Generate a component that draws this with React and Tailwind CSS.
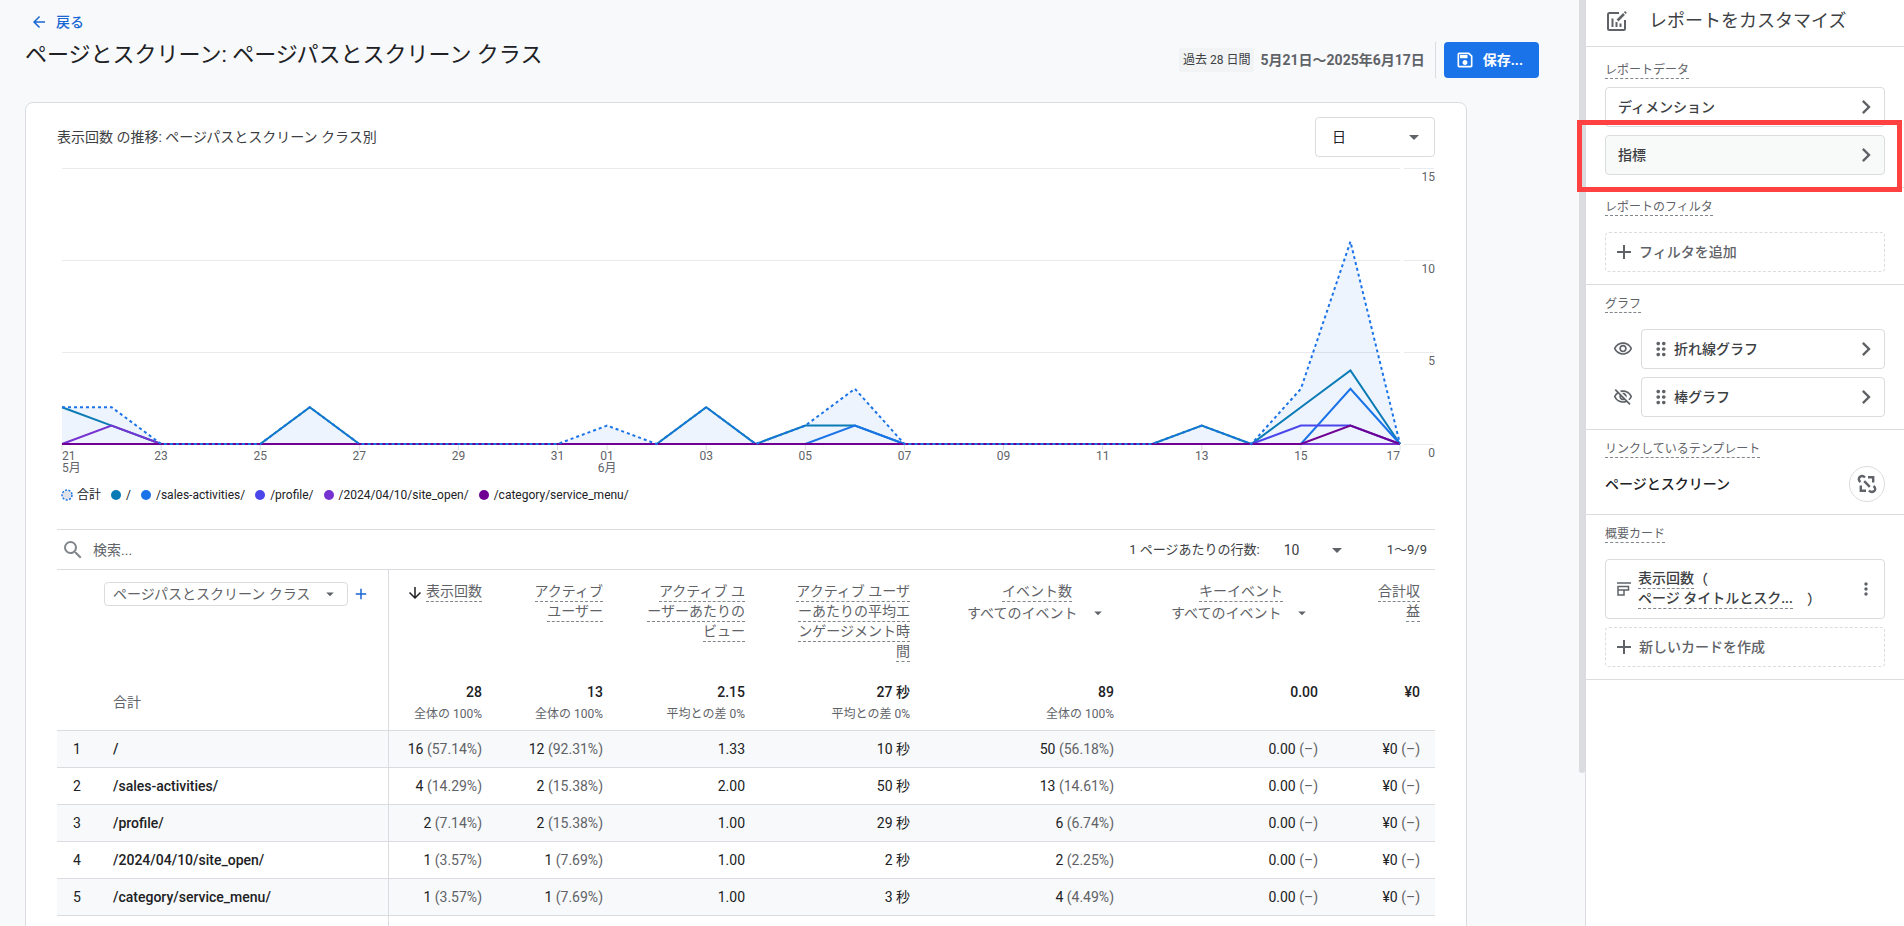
import React, { useState } from 'react'
import {
  MdAdd,
  MdArrowBack,
  MdArrowDownward,
  MdArrowDropDown,
  MdChevronRight,
  MdDragIndicator,
  MdMoreVert,
  MdOutlineSave,
  MdOutlineVisibility,
  MdOutlineVisibilityOff,
  MdSearch,
} from 'react-icons/md'
import clsx from 'clsx'

// Daily values from May 21 to June 17, missing days are zero
const DAYS = 28
const series = [
  { name: '/', color: '#0b7bb5', points: { 0: 2, 1: 1, 5: 2, 13: 2, 15: 1, 16: 1, 23: 1, 25: 2, 26: 4 } },
  { name: '/sales-activities/', color: '#1a73e8', points: { 16: 1, 26: 3 } },
  { name: '/profile/', color: '#4a46ea', points: { 25: 1, 26: 1 } },
  { name: '/2024/04/10/site_open/', color: '#7633d1', points: { 1: 1 } },
  { name: '/category/service_menu/', color: '#6f0093', points: { 26: 1 } },
]
const total = { 0: 2, 1: 2, 5: 2, 11: 1, 13: 2, 15: 1, 16: 3, 23: 1, 25: 3, 26: 11 }

const xLabels = [
  { day: 0, text: '21', month: '5月' },
  { day: 2, text: '23' },
  { day: 4, text: '25' },
  { day: 6, text: '27' },
  { day: 8, text: '29' },
  { day: 10, text: '31' },
  { day: 11, text: '01', month: '6月' },
  { day: 13, text: '03' },
  { day: 15, text: '05' },
  { day: 17, text: '07' },
  { day: 19, text: '09' },
  { day: 21, text: '11' },
  { day: 23, text: '13' },
  { day: 25, text: '15' },
  { day: 27, text: '17' },
]

const columns = [
  { lines: ['表示回数'], sorted: true, total: '28', note: '全体の 100%' },
  { lines: ['アクティブ', 'ユーザー'], total: '13', note: '全体の 100%' },
  { lines: ['アクティブ ユ', 'ーザーあたりの', 'ビュー'], total: '2.15', note: '平均との差 0%' },
  { lines: ['アクティブ ユーザ', 'ーあたりの平均エ', 'ンゲージメント時', '間'], total: '27 秒', note: '平均との差 0%' },
  { lines: ['イベント数'], filter: true, total: '89', note: '全体の 100%' },
  { lines: ['キーイベント'], filter: true, total: '0.00', note: '' },
  { lines: ['合計収', '益'], total: '¥0', note: '' },
]

const rows = [
  { path: '/', cells: [['16', '57.14%'], ['12', '92.31%'], ['1.33'], ['10 秒'], ['50', '56.18%'], ['0.00', '–'], ['¥0', '–']] },
  { path: '/sales-activities/', cells: [['4', '14.29%'], ['2', '15.38%'], ['2.00'], ['50 秒'], ['13', '14.61%'], ['0.00', '–'], ['¥0', '–']] },
  { path: '/profile/', cells: [['2', '7.14%'], ['2', '15.38%'], ['1.00'], ['29 秒'], ['6', '6.74%'], ['0.00', '–'], ['¥0', '–']] },
  { path: '/2024/04/10/site_open/', cells: [['1', '3.57%'], ['1', '7.69%'], ['1.00'], ['2 秒'], ['2', '2.25%'], ['0.00', '–'], ['¥0', '–']] },
  { path: '/category/service_menu/', cells: [['1', '3.57%'], ['1', '7.69%'], ['1.00'], ['3 秒'], ['4', '4.49%'], ['0.00', '–'], ['¥0', '–']] },
]

const xAt = (day) => 5 + (day * 1338) / (DAYS - 1)
const yAt = (value) => 287 - value * 18.4
const toPoints = (values) =>
  Array.from({ length: DAYS }, (_, i) => `${xAt(i)},${yAt(values[i] || 0)}`).join(' ')

const TrendChart = () => (
  <svg viewBox="0 0 1378 326" className="block w-full" role="img" aria-label="表示回数 の推移">
    {[15, 10, 5, 0].map((v) => {
      const y = 287.5 - v * 18.4
      return (
        <g key={v}>
          <path d={`M5 ${y}H1343M1347 ${y}H1377`} stroke="#e8eaed" />
          <text x="1378" y={y + 12} textAnchor="end" fontSize="12" fill="#5f6368">{v}</text>
        </g>
      )
    })}
    <polygon points={`5,287 ${toPoints(total)} 1343,287`} fill="#1a73e8" fillOpacity="0.08" />
    {series.map((s) => (
      <polyline key={s.name} points={toPoints(s.points)} fill="none" stroke={s.color} strokeWidth="2" />
    ))}
    <polyline points={toPoints(total)} fill="none" stroke="#1a73e8" strokeWidth="2" strokeDasharray="3 3" />
    {xLabels.map((l) => {
      const anchor = l.day === 0 ? 'start' : l.day === DAYS - 1 ? 'end' : 'middle'
      return (
        <g key={l.day} textAnchor={anchor} fontSize="12" fill="#5f6368">
          <path d={`M${xAt(l.day)} 288v5`} stroke="#dadce0" />
          <text x={xAt(l.day)} y="303">{l.text}</text>
          {l.month && <text x={xAt(l.day)} y="315">{l.month}</text>}
        </g>
      )
    })}
  </svg>
)

const Legend = () => (
  <ul className="flex h-6 items-center gap-2.5 pl-1 text-xs text-[#202124]">
    <li className="flex items-center gap-1">
      <svg width="12" height="12" viewBox="0 0 12 12">
        <circle cx="6" cy="6" r="5" fill="#dfe3e8" stroke="#1a73e8" strokeWidth="1.5" strokeDasharray="2 1.5" />
      </svg>
      合計
    </li>
    {series.map((s) => (
      <li key={s.name} className="flex items-center gap-[5px]">
        <span className="size-2.5 rounded-full" style={{ backgroundColor: s.color }} />
        {s.name}
      </li>
    ))}
  </ul>
)

const Underlined = ({ children }) => (
  <span className="block h-5 border-b border-dashed border-[#80868b] leading-[19px] whitespace-nowrap">
    {children}
  </span>
)

// Native select with the caret laid over its right end
const Select = ({ label, options, caret, className, caretClassName }) => (
  <span className="inline-grid items-center">
    <select
      aria-label={label}
      className={clsx('col-start-1 row-start-1 appearance-none bg-transparent outline-none', className)}
    >
      {options.map((o) => (
        <option key={o}>{o}</option>
      ))}
    </select>
    <MdArrowDropDown
      size={caret}
      className={clsx('pointer-events-none col-start-1 row-start-1 justify-self-end text-[#5f6368]', caretClassName)}
    />
  </span>
)

const HeaderCell = ({ column }) => {
  if (column.filter) {
    return (
      <th className="pt-3 pr-[22px] pb-3 align-top font-normal">
        <div className="flex justify-end">
          <div className="flex flex-col items-center">
            <Underlined>{column.lines[0]}</Underlined>
            <Select label={column.lines[0]} options={['すべてのイベント']} caret={18} className="h-[22px] pr-7" />
          </div>
        </div>
      </th>
    )
  }
  return (
    <th className="pt-3 pr-[15px] pb-3 align-top font-normal">
      <div className="flex justify-end">
        {column.sorted && <MdArrowDownward size={18} className="mt-0.5 mr-0.5 text-[#202124]" />}
        <div className="flex flex-col items-end">
          {column.lines.map((line) => (
            <Underlined key={line}>{line}</Underlined>
          ))}
        </div>
      </div>
    </th>
  )
}

const DataTable = () => (
  <table className="w-full table-fixed border-separate border-spacing-0 text-right text-sm text-[#202124]">
    <colgroup>
      <col className="w-10" />
      <col />
      <col className="w-[108px]" />
      <col className="w-[121px]" />
      <col className="w-[142px]" />
      <col className="w-[165px]" />
      <col className="w-[204px]" />
      <col className="w-[204px]" />
      <col className="w-[102px]" />
    </colgroup>
    <thead className="text-[#5f6368]">
      <tr>
        <th colSpan={2} className="border-r border-[#dadce0] pt-3 pl-[47px] text-left align-top font-normal">
          <div className="flex items-center gap-1">
            <button type="button" className="flex h-6 items-center rounded border border-[#dadce0] px-2">
              ページパスとスクリーン クラス
              <MdArrowDropDown size={18} className="ml-[11px]" />
            </button>
            <button type="button" aria-label="ディメンションを追加">
              <MdAdd size={18} className="text-[#1967d2]" />
            </button>
          </div>
        </th>
        {columns.map((c) => (
          <HeaderCell key={c.lines.join('')} column={c} />
        ))}
      </tr>
    </thead>
    <tbody>
      <tr>
        <td className="border-b border-[#dadce0]" />
        <td className="border-r border-b border-[#dadce0] pl-4 text-left text-[#5f6368]">合計</td>
        {columns.map((c) => (
          <td key={c.lines.join('')} className="border-b border-[#dadce0] pt-2 pr-[15px] pb-1 align-top">
            <div className="h-5 leading-5 font-medium">{c.total}</div>
            <div className="h-6 text-xs leading-6 text-[#5f6368]">{c.note}</div>
          </td>
        ))}
      </tr>
      {rows.map((row, i) => (
        <tr key={row.path} className={clsx('h-[37px]', i % 2 === 0 && 'bg-[#f8f9fa]')}>
          <td className="border-b border-[#dadce0] text-center">{i + 1}</td>
          <td className="border-r border-b border-[#dadce0] pl-4 text-left font-medium">{row.path}</td>
          {row.cells.map(([value, share], j) => (
            <td key={j} className="border-b border-[#dadce0] pr-[15px] whitespace-nowrap">
              {value}
              {share && <span className="text-[#5f6368]"> ({share})</span>}
            </td>
          ))}
        </tr>
      ))}
      <tr className="h-[37px]">
        <td />
        <td className="border-r border-[#dadce0]" />
        <td colSpan={7} />
      </tr>
    </tbody>
  </table>
)

const CustomizeIcon = () => (
  <svg width="20" height="20" viewBox="0 0 20 20" fill="none" stroke="#5f6368">
    <path d="M12 2H2.5Q1 2 1 3.500V17.500Q1 19 2.500 19H16.500Q18 19 18 17.500V9" strokeWidth="2" />
    <path d="M5.500 7.500V16M9.500 11V16M13.500 12.500V16" strokeWidth="2" />
    <path d="M10.500 9.500L17 3" strokeWidth="2.500" />
    <path d="M17.800 2.200L19 1" strokeWidth="2.500" />
  </svg>
)

const UnlinkIcon = () => (
  <svg width="20" height="20" viewBox="0 0 20 20" fill="none" stroke="#5f6368" strokeWidth="2.400">
    <path d="M3.500 8C1.200 6.200 1.500 4.200 2.800 3C4.200 1.800 6.200 1.600 8 3.500" />
    <path d="M16.500 12C18.800 13.800 18.500 15.800 17.200 17C15.800 18.200 13.800 18.400 12 16.500" />
    <path d="M11 3.200H16.200V8.500" />
    <path d="M3.800 11.500V16.800H9" />
    <path d="M7.200 7.200L12.800 12.800" />
  </svg>
)

const CardListIcon = () => (
  <svg width="14" height="14" viewBox="0 0 14 14" fill="none" stroke="#5f6368" strokeWidth="1.500">
    <path d="M0 1H14" />
    <path d="M1 4.500H11.500V8H1ZM1 8V13H7V8" />
  </svg>
)

const Section = ({ title, className, children }) => (
  <section className={clsx('border-b border-[#dadce0] px-[19px] pb-3', className || 'pt-[11px]')}>
    <h3 className="flex text-xs text-[#5f6368]">
      <span className="border-b border-dashed border-[#80868b] leading-4">{title}</span>
    </h3>
    {children}
  </section>
)

const PanelButton = ({ draggable, active, children }) => (
  <button
    type="button"
    className={clsx(
      'flex h-10 w-full items-center rounded border border-[#dadce0] pr-1 pl-3 text-left text-sm font-medium text-[#3c4043]',
      active && 'bg-[#f8f9f9]'
    )}
  >
    {draggable && <MdDragIndicator size={22} className="mr-0.5 -ml-1 text-[#5f6368]" />}
    <span className="flex-1">{children}</span>
    <MdChevronRight size={28} className="text-[#5f6368]" />
  </button>
)

const AddButton = ({ children }) => (
  <button
    type="button"
    className="flex h-10 w-full items-center gap-[3px] rounded border border-dashed border-[#dadce0] pl-1.5 text-sm font-medium text-[#5f6368]"
  >
    <MdAdd size={24} />
    {children}
  </button>
)

const ChartToggle = ({ name, defaultShown }) => {
  const [shown, setShown] = useState(defaultShown)
  const Eye = shown ? MdOutlineVisibility : MdOutlineVisibilityOff

  return (
    <div className="flex items-center gap-2">
      <button
        type="button"
        aria-label={`${name}の表示`}
        onClick={() => setShown(!shown)}
        className="flex w-7 shrink-0 justify-end text-[#5f6368]"
      >
        <Eye size={20} />
      </button>
      <PanelButton draggable>{name}</PanelButton>
    </div>
  )
}

const CustomizePanel = () => (
  <aside className="relative w-[319px] shrink-0 border-l border-[#dadce0] bg-white">
    <header className="flex h-[47px] items-center gap-[22px] border-b border-[#dadce0] pb-1 pl-[21px]">
      <CustomizeIcon />
      <h2 className="text-lg leading-6 text-[#3c4043]">レポートをカスタマイズ</h2>
    </header>

    <Section title="レポートデータ" className="pt-[15px]">
      <div className="mt-2 space-y-2">
        <PanelButton>ディメンション</PanelButton>
        <PanelButton active>指標</PanelButton>
      </div>
    </Section>

    <Section title="レポートのフィルタ">
      <div className="mt-4">
        <AddButton>フィルタを追加</AddButton>
      </div>
    </Section>

    <Section title="グラフ">
      <div className="mt-4 space-y-2">
        <ChartToggle name="折れ線グラフ" defaultShown />
        <ChartToggle name="棒グラフ" defaultShown={false} />
      </div>
    </Section>

    <Section title="リンクしているテンプレート">
      <div className="mt-2 flex items-center justify-between text-sm font-medium text-[#202124]">
        ページとスクリーン
        <button
          type="button"
          aria-label="リンクを解除"
          className="flex size-9 items-center justify-center rounded-full border border-[#dadce0]"
        >
          <UnlinkIcon />
        </button>
      </div>
    </Section>

    <Section title="概要カード">
      <div className="mt-4 space-y-2">
        <div className="flex h-[60px] items-center rounded border border-[#dadce0] pr-2 pl-[11px] text-sm font-medium text-[#3c4043]">
          <CardListIcon />
          <div className="ml-[7px] flex-1">
            <div className="flex">
              <Underlined>表示回数</Underlined>（
            </div>
            <div className="flex">
              <Underlined>ページ タイトルとスク...</Underlined>
              <span className="ml-3.5">）</span>
            </div>
          </div>
          <button type="button" aria-label="その他">
            <MdMoreVert size={20} className="text-[#5f6368]" />
          </button>
        </div>
        <AddButton>新しいカードを作成</AddButton>
      </div>
    </Section>

    {/* Highlight around the metrics button */}
    <div className="pointer-events-none absolute top-[120px] right-0.5 -left-[9px] h-[72px] border-[5px] border-[#ff4141]" />
  </aside>
)

const PageHeader = () => (
  <header className="flex items-end justify-between pr-10 pl-[25px]">
    <div className="pt-3 pb-[31px]">
      <a href="#" className="flex h-5 items-center gap-2 pl-[5px] text-sm font-medium text-[#1967d2]">
        <MdArrowBack size={18} />
        戻る
      </a>
      <h1 className="mt-[7px] text-[22px] leading-8 text-[#202124]">ページとスクリーン: ページパスとスクリーン クラス</h1>
    </div>
    <div className="mb-6 flex h-9 items-center">
      <span className="rounded-xs bg-[#f1f3f4] px-1 text-xs leading-6 text-[#3c4043]">過去 28 日間</span>
      <span className="ml-1.5 text-sm font-bold text-[#5f6368]">5月21日～2025年6月17日</span>
      <span className="mr-2 ml-2.5 h-9 w-px bg-[#dadce0]" />
      <button
        type="button"
        className="flex h-9 items-center gap-2 rounded bg-[#1a73e8] pr-4 pl-[11px] text-sm font-bold text-white"
      >
        <MdOutlineSave size={20} />
        保存...
      </button>
    </div>
  </header>
)

const App = () => {
  const [query, setQuery] = useState('')

  return (
    <div className="flex h-screen overflow-hidden bg-[#f8f9fb] font-[Roboto,'Noto_Sans_CJK_JP',sans-serif]">
      <main className="min-w-0 flex-1 overflow-hidden">
        <PageHeader />
        <div className="mr-28 ml-[25px] rounded-lg border border-[#dadce0] bg-white px-[31px] pt-3.5">
          <div className="flex items-center justify-between">
            <h2 className="text-sm text-[#3c4043]">表示回数 の推移: ページパスとスクリーン クラス別</h2>
            <Select
              label="集計単位"
              options={['日', '週', '月']}
              caret={24}
              className="h-10 w-[120px] rounded border border-[#dadce0] pl-4 text-sm text-[#202124]"
              caretClassName="mr-[9px]"
            />
          </div>

          <TrendChart />
          <Legend />

          {/* Search and paging bar */}
          <div className="mt-[22px] flex h-[41px] items-center border-y border-[#dadce0] pr-2 pl-1 text-[13px] text-[#3c4043]">
            <label className="flex flex-1 items-center gap-2">
              <MdSearch size={24} className="text-[#80868b]" />
              <input
                type="text"
                aria-label="検索"
                placeholder="検索..."
                value={query}
                onChange={(e) => setQuery(e.target.value)}
                className="flex-1 text-sm outline-none placeholder:text-[#5f6368]"
              />
            </label>
            <span>1 ページあたりの行数:</span>
            <Select label="1 ページあたりの行数" options={['10', '25', '50']} caret={24} className="ml-6 w-[65px] text-sm" />
            <span className="ml-[38px]">1～9/9</span>
          </div>

          <DataTable />
        </div>
      </main>

      {/* Scrollbar thumb of the report area */}
      <div className="h-[773px] w-1.5 shrink-0 rounded-b bg-[#dadce0]" />
      <CustomizePanel />
    </div>
  )
}

export default App
